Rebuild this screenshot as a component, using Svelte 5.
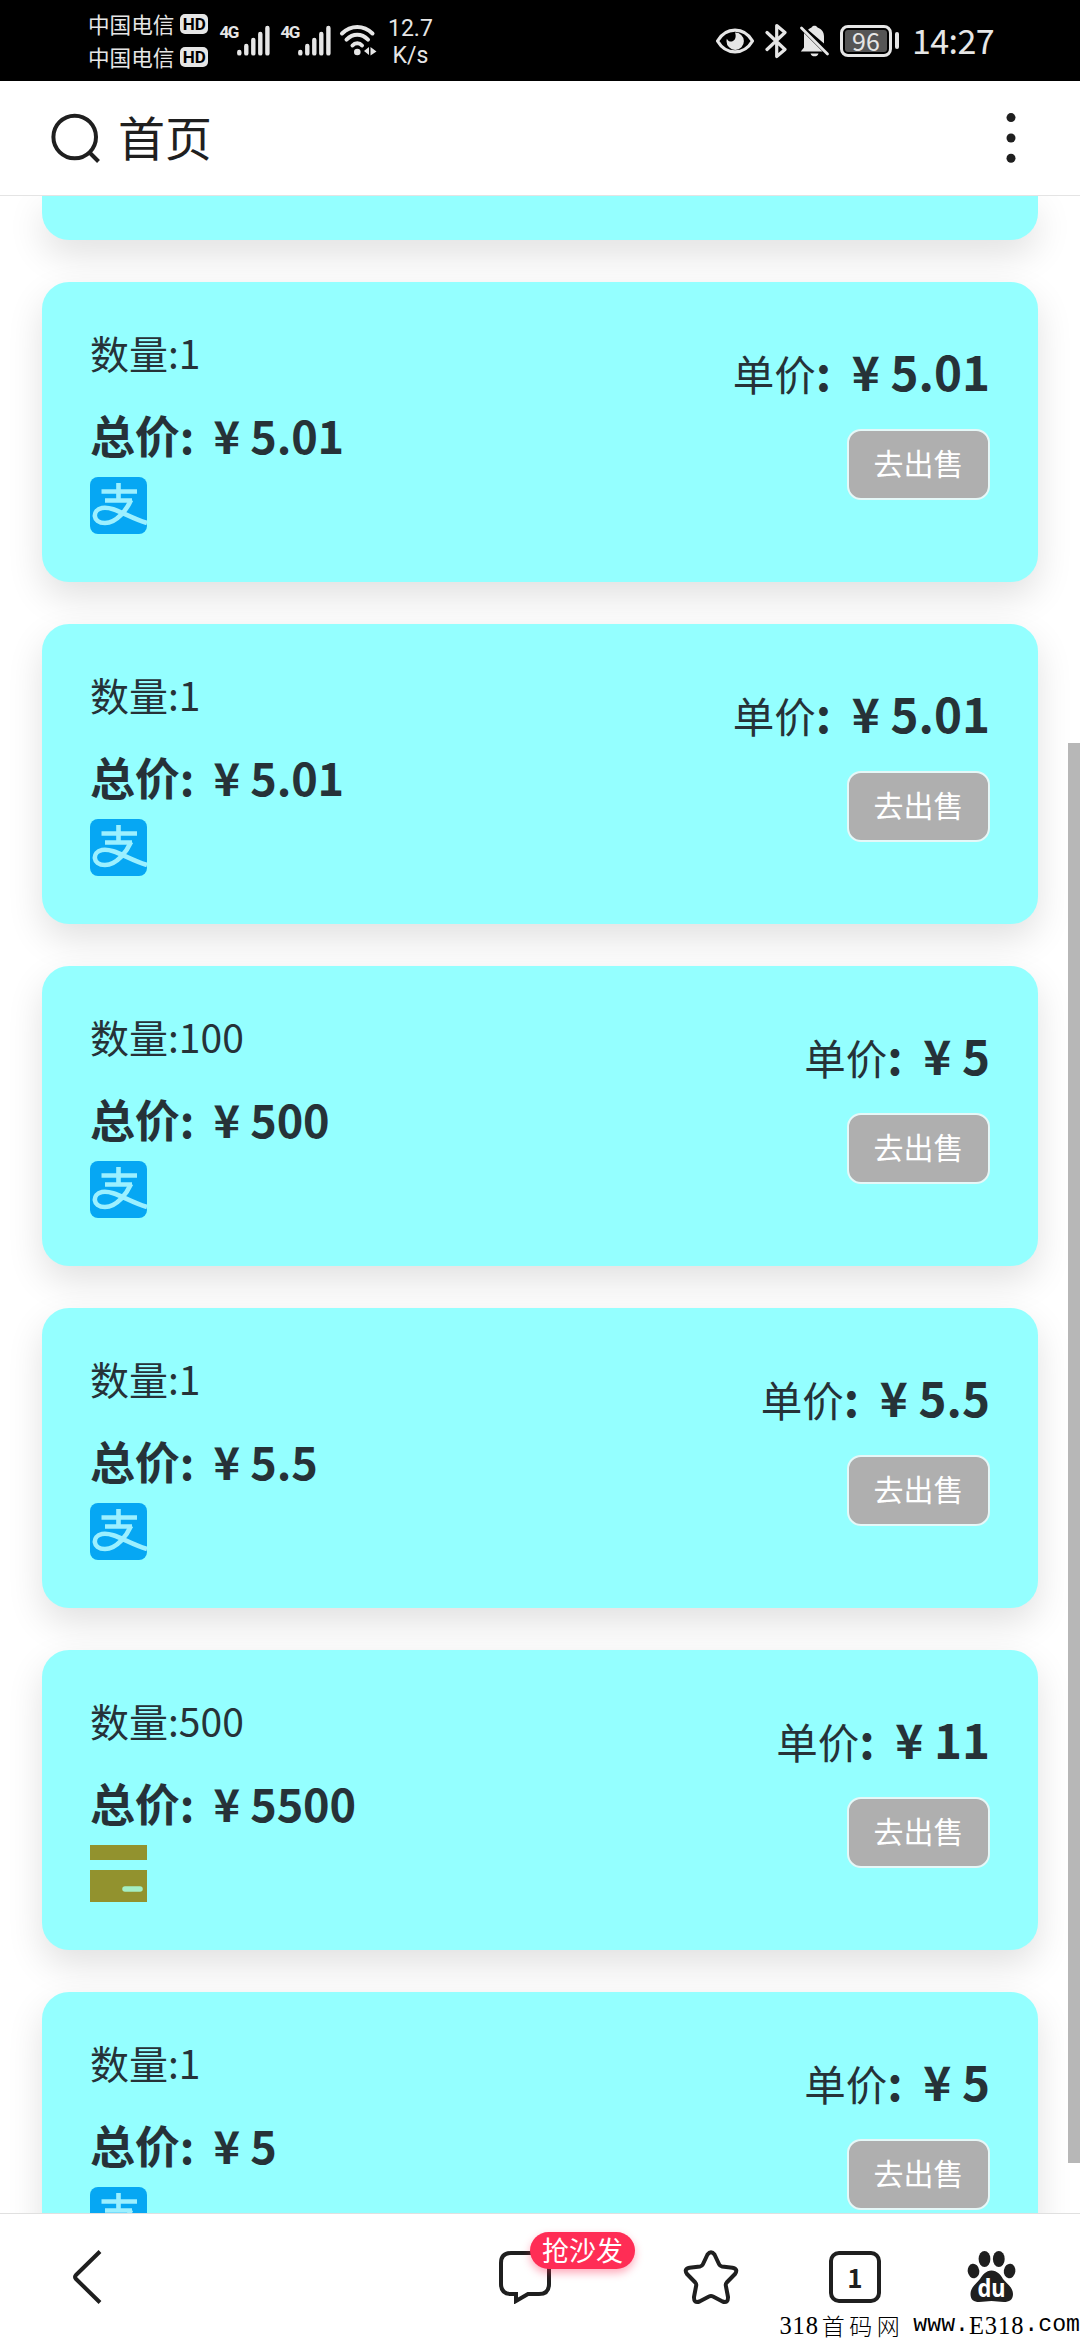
<script>
  const orders = [
    { count: '1', total: '5.01', price: '5.01', pay: 'alipay' },
    { count: '1', total: '5.01', price: '5.01', pay: 'alipay' },
    { count: '100', total: '500', price: '5', pay: 'alipay' },
    { count: '1', total: '5.5', price: '5.5', pay: 'alipay' },
    { count: '500', total: '5500', price: '11', pay: 'card' },
    { count: '1', total: '5', price: '5', pay: 'alipay' }
  ];
</script>

{#snippet signal()}
  <div class="signal">
    <span>4G</span>
    <svg width="33" height="32" viewBox="18 0 33 32">
      <path d="M20.300 27v1.400M27.300 21v7.400M34.300 15v13.400M41.300 9v19.400M48.400 3v25.400" stroke="#e6e6e6" stroke-width="4.400" stroke-linecap="round" />
    </svg>
  </div>
{/snippet}

<div class="screen">
  <header class="status">
    <div class="carriers">
      <div class="carrier"><span>中国电信</span><b>HD</b></div>
      <div class="carrier"><span>中国电信</span><b>HD</b></div>
    </div>
    <div class="signals">{@render signal()}{@render signal()}</div>
    <svg class="wifi" width="38" height="34" viewBox="0 0 38 34">
      <g fill="none" stroke="#e6e6e6" stroke-width="4" stroke-linecap="round">
        <path d="M3 9.500C12 .8 24.500 .8 33.500 9.500" />
        <path d="M7.500 15.700C14 9.200 22.500 9.200 29 15.700" />
        <path d="M13.500 21.500C16 18.600 20.500 18.600 23 21.500" />
      </g>
      <circle cx="18.300" cy="28" r="3.300" fill="#e6e6e6" />
      <path d="M25 27l5-4v8zM31.500 23l6 4.500-6 4z" fill="#e6e6e6" />
    </svg>
    <div class="speed"><span>12.7</span><span>K/s</span></div>

    <div class="right">
      <svg width="40" height="34" viewBox="0 0 40 34">
        <path d="M2.500 17C11 2.500 29 2.500 37.500 17 29 31.500 11 31.500 2.500 17z" fill="none" stroke="#e6e6e6" stroke-width="3.200" stroke-linejoin="round" />
        <path d="M20 8.500a8.700 8.700 0 1 1-8.500 8.700c0-1 .1-1.800.4-2.500 1 2.200 3 3.200 5 2.800 3.300-.7 4.700-5 3.100-9z" fill="#e6e6e6" />
      </svg>
      <svg class="bt" width="23" height="36" viewBox="0 0 23 36">
        <path d="M2 9.500L20 26.500 11.700 33.500V2.500L20 9.500 2 26.500" fill="none" stroke="#e6e6e6" stroke-width="3.200" stroke-linejoin="round" stroke-linecap="round" />
      </svg>
      <svg class="bell" width="31" height="34" viewBox="0 0 31 34">
        <path d="M5 9L23.500 27.500H1.800L5 23.500zM9 5.700C10.500 4.500 11.500 4 12.500 3.500 13.500 1 17.500 1 18.500 3.500 23 5 25 8.500 25 12.500V19.500z" fill="#e6e6e6" />
        <path d="M11.500 29.500h8c-1 3.800-7 3.800-8 0z" fill="#e6e6e6" />
        <path d="M2.500 4L28.500 30" stroke="#e6e6e6" stroke-width="2.800" stroke-linecap="round" />
      </svg>
      <div class="battery"><span>96</span></div>
      <i class="nub"></i>
      <time>14:27</time>
    </div>
  </header>

  <nav class="titlebar">
    <svg width="52" height="52" viewBox="0 0 52 52" fill="none" stroke="#1f1f1f" stroke-width="4">
      <circle cx="24.700" cy="25" r="21.300" />
      <path d="M40 41l8.500 8.500" />
    </svg>
    <h1>首页</h1>
    <svg class="more" width="10" height="52" viewBox="0 0 10 52" fill="#1f1f1f">
      <circle cx="5" cy="5.600" r="4.500" /><circle cx="5" cy="26" r="4.500" /><circle cx="5" cy="46.300" r="4.500" />
    </svg>
  </nav>

  <main>
    <article class="card tail"></article>
    {#each orders as order}
      <article class="card">
        <div class="info">
          <p class="count">数量:{order.count}</p>
          <p class="total">总价: <i class="yen">¥</i>{order.total}</p>
          {#if order.pay === 'alipay'}
            <svg class="pay" width="57" height="57" viewBox="0 0 57 57">
              <rect width="57" height="57" rx="8" fill="#06a7f3" />
              <g fill="none" stroke="#9cf0ff">
                <path d="M11.500 14.500H47M28.500 6V24M15 23.500H42" stroke-width="4.600" />
                <path d="M41 23C37 32 27 46 15 46 2 46 2 33 12 31 24 29 37 40 57 46" stroke-width="4.600" />
              </g>
            </svg>
          {:else}
            <svg class="pay" width="57" height="57" viewBox="0 0 57 57">
              <path d="M0 0H57V15H0zM0 25H57V57H0z" fill="#92922e" />
              <path d="M35 44H50" stroke="#a4efc4" stroke-width="5.500" stroke-linecap="round" />
            </svg>
          {/if}
        </div>
        <div class="side">
          <p class="price"><span>单价</span>: <i class="yen">¥</i>{order.price}</p>
          <button>去出售</button>
        </div>
      </article>
    {/each}
    <div class="thumb"></div>
  </main>

  <footer>
    <div class="tools">
      <svg class="back" width="32" height="56" viewBox="0 0 32 56" fill="none" stroke="#1f1f1f" stroke-width="4">
        <path d="M29 2.500L5 26q-2 2 0 4L29 53.500" />
      </svg>
      <div class="comment">
        <svg width="54" height="54" viewBox="0 0 54 54" fill="none" stroke="#1f1f1f" stroke-width="4">
          <path d="M13 3H41Q51 3 51 13V34Q51 44 41 44H30L18 51V44H13Q3 44 3 34V13Q3 3 13 3z" />
        </svg>
        <span class="badge">抢沙发</span>
      </div>
      <svg class="star" width="56" height="56" viewBox="0 0 56 56" fill="none" stroke="#1f1f1f" stroke-width="4" stroke-linejoin="round">
        <path d="M24.500 5.500Q28 .8 31.500 5.500L36.200 15.500Q37 17.200 39 17.500L49.500 18.800Q55.500 20 52 25L43.700 33.500Q42.500 34.800 42.800 36.500L45 48Q45.300 54.500 39.500 52.500L30 47.500Q28 46.500 26 47.500L16.500 52.500Q10.700 54.500 11 48L13.200 36.500Q13.500 34.800 12.300 33.500L4 25Q.5 20 6.500 18.800L17 17.500Q19 17.200 19.800 15.500z" />
      </svg>
      <div class="tabs">1</div>
      <svg class="paw" width="50" height="54" viewBox="0 0 50 54">
        <g fill="#1f1f1f">
          <ellipse cx="6.500" cy="21" rx="5.800" ry="7.300" transform="rotate(-8 6.500 21)" />
          <ellipse cx="17.500" cy="9" rx="5.900" ry="8" />
          <ellipse cx="31.800" cy="9" rx="5.900" ry="8" />
          <ellipse cx="42.600" cy="21" rx="5.800" ry="7.300" transform="rotate(8 42.600 21)" />
          <path d="M24.500 20.500C30 20.500 34 25 36 29 39 33 46 37 46 44 46 50 42 52 37 52 32 52 29 51 24.500 51 20 51 17 52 12 52 7 52 3.500 50 3.500 44 3.500 37 10 33 13 29 15.500 25 19 20.500 24.500 20.500z" />
        </g>
        <text x="24.500" y="47" class="du" text-anchor="middle" textLength="28" lengthAdjust="spacingAndGlyphs">du</text>
      </svg>
    </div>
    <div class="mark"><span class="serif">318</span><span class="han">首码网</span><span class="site">www.</span><span class="serif">E318</span><span>.com</span></div>
  </footer>
</div>

<style>
  :global(body) { margin: 0; background: #fff; }
  .screen {
    width: 1080px;
    height: 2340px;
    display: flex;
    flex-direction: column;
    overflow: hidden;
    background: #fff;
    font-family: 'Noto Sans CJK SC', sans-serif;
    color: #263238;
  }
  p, h1 { margin: 0; font-weight: 400; white-space: pre; }
  svg { display: block; flex: none; }

  .status {
    height: 81px;
    flex: none;
    display: flex;
    background: #000;
    color: #e6e6e6;
    box-sizing: border-box;
    padding: 0 87px 0 88px;
  }
  .carriers { padding-top: 7px; }
  .carrier { height: 33px; display: flex; align-items: center; font-size: 21.6px; line-height: 33px; }
  .carrier b {
    margin-left: 6px;
    width: 28px;
    height: 20px;
    border-radius: 5px;
    background: #e6e6e6;
    color: #000;
    font: 700 17px/20px Roboto, sans-serif;
    text-align: center;
  }
  .signals { display: flex; gap: 10px; margin: 25px 0 0 11px; }
  .signal { display: flex; width: 51px; }
  .signal span { width: 18px; flex: none; font: 700 17px/15px Roboto, sans-serif; letter-spacing: -1.500px; }
  .wifi { margin: 24px 0 0 8px; }
  .speed {
    margin: 15px 0 0 8px;
    width: 50px;
    display: flex;
    flex-direction: column;
    align-items: center;
    font: 400 23px/27px Roboto, sans-serif;
  }
  .right { display: flex; margin-left: auto; align-items: center; }
  .bt { margin-left: 10px; }
  .bell { margin-left: 11px; }
  .battery {
    margin-left: 10px;
    width: 52px;
    height: 32px;
    box-sizing: border-box;
    border: 3px solid #e6e6e6;
    border-radius: 8px;
    padding: 2px;
  }
  .battery span {
    display: block;
    height: 22px;
    border-radius: 3px;
    background: #555;
    font-size: 25px;
    line-height: 21px;
    text-align: center;
  }
  .nub { width: 4px; height: 17px; margin-left: 3px; border-radius: 2px; background: #e6e6e6; }
  time { margin-left: 13px; font-size: 34px; line-height: 44px; letter-spacing: -.6px; width: 81px; padding-bottom: 2px; }

  .titlebar {
    height: 114px;
    flex: none;
    display: flex;
    align-items: center;
    padding: 0 64px 0 50px;
    color: #1f1f1f;
  }
  .titlebar h1 { margin-left: 16px; padding-bottom: 4px; font-size: 47px; line-height: 60px; }
  .more { margin-left: auto; }

  main {
    position: relative;
    height: 2019px;
    flex: none;
    overflow: hidden;
    box-sizing: border-box;
    border-top: 1px solid #e4e4e4;
    border-bottom: 1px solid #e0e0e0;
    padding: 0 42px;
    display: flex;
    flex-direction: column;
    gap: 42px;
  }
  .card {
    flex: none;
    height: 300px;
    box-sizing: border-box;
    padding: 42px 48px 0;
    display: flex;
    justify-content: space-between;
    border-radius: 27px;
    background: #94ffff;
    box-shadow: 0 15px 36px rgba(0, 0, 0, .12);
  }
  .tail { height: 44px; border-radius: 0 0 27px 27px; }
  .count { font-size: 39px; line-height: 56px; }
  .total { margin-top: 22px; font-size: 45px; line-height: 66px; font-weight: 700; letter-spacing: -.15px; }
  .yen { display: inline-block; width: 1em; margin-right: 1px; font-style: normal; text-align: center; }
  .pay { margin-top: 9px; }
  .side { display: flex; flex-direction: column; align-items: flex-end; padding-top: 11px; }
  .price { font-size: 47.500px; line-height: 72px; height: 72px; font-weight: 700; }
  .price span { font-size: 41.500px; font-weight: 400; }
  button {
    margin-top: 22px;
    width: 143px;
    height: 71px;
    padding: 0 0 5px;
    border: 2px solid #e6f8f8;
    border-radius: 14px;
    background: #afafaf;
    color: #fff;
    font: 400 30px/60px 'Noto Sans CJK SC', sans-serif;
  }
  .thumb { position: absolute; right: 0; top: 547px; width: 12px; height: 1420px; background: #b7b7b7; }

  footer { flex: 1; display: flex; flex-direction: column; }
  .tools { display: flex; flex: none; align-items: center; height: 98px; padding: 27px 63px 0 71px; box-sizing: border-box; }
  .comment { position: relative; margin-left: 395px; }
  .badge {
    position: absolute;
    left: 32px;
    top: -18px;
    width: 105px;
    height: 37px;
    border-radius: 19px;
    background: #ff2d55;
    color: #fff;
    font-size: 27px;
    line-height: 36px;
    text-align: center;
    box-shadow: 0 4px 9px rgba(255, 45, 85, .4);
  }
  .star { margin-left: 131px; }
  .tabs {
    margin-left: 90px;
    width: 52px;
    height: 52px;
    box-sizing: border-box;
    border: 4px solid #1f1f1f;
    border-radius: 10px;
    text-align: center;
    font: 700 26px/43px 'Noto Sans CJK SC', sans-serif;
    color: #1f1f1f;
  }
  .paw { margin-left: auto; }
  .du { font: 700 25px 'Noto Sans', sans-serif; fill: #fff; }
  .mark {
    display: flex;
    justify-content: flex-end;
    align-items: center;
    height: 27px;
    line-height: 27px;
    white-space: nowrap;
    color: #000;
    font-family: 'Liberation Mono', monospace;
    font-size: 23.2px;
  }
  .serif { font-family: 'Liberation Serif', serif; font-size: 24.500px; letter-spacing: .9px; }
  .han { font-family: 'Noto Sans CJK SC', sans-serif; font-size: 23px; line-height: 25px; font-weight: 300; letter-spacing: 4.500px; margin-left: 3px; }
  .site { margin-left: 9px; }
</style>
